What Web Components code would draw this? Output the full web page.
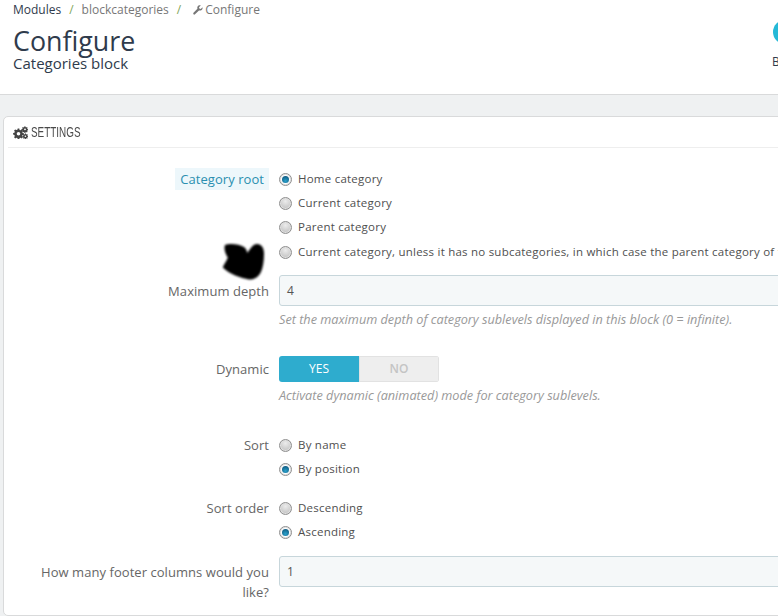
<!DOCTYPE html>
<html><head><meta charset="utf-8"><title>Configure</title>
<style>
html,body{margin:0;padding:0;width:778px;height:616px;overflow:hidden;background:#eff1f2}
body{font:12px/1.42 "Open Sans",sans-serif;color:#555}
</style></head><body>
<bo-page>
  <page-head></page-head>
  <settings-panel>
    <form-row label="Category root" active style="height:24px">
      <radio-opt checked>Home category</radio-opt>
    </form-row>
    <form-row style="height:24px"><radio-opt>Current category</radio-opt></form-row>
    <form-row style="height:25px"><radio-opt>Parent category</radio-opt></form-row>
    <form-row style="height:24px"><radio-opt>Current category, unless it has no subcategories, in which case the parent category of the current category is used</radio-opt><ink-blob slot="over"></ink-blob></form-row>
    <form-row label="Maximum depth" style="height:75px;margin-top:8px" field>
      <text-field value="4"></text-field>
      <help-text>Set the maximum depth of category sublevels displayed in this block (0 = infinite).</help-text>
    </form-row>
    <form-row label="Dynamic" style="height:80px;margin-top:6px" field2>
      <yes-no></yes-no>
      <help-text>Activate dynamic (animated) mode for category sublevels.</help-text>
    </form-row>
    <form-row label="Sort" style="height:24px"><radio-opt>By name</radio-opt></form-row>
    <form-row style="height:39px"><radio-opt checked>By position</radio-opt></form-row>
    <form-row label="Sort order" style="height:24px"><radio-opt>Descending</radio-opt></form-row>
    <form-row style="height:33px"><radio-opt checked>Ascending</radio-opt></form-row>
    <form-row label="How many footer columns would you like?" field>
      <text-field value="1"></text-field>
    </form-row>
  </settings-panel>
</bo-page>
<script>
function def(name,html,init){
  customElements.define(name,class extends HTMLElement{
    connectedCallback(){ if(this.shadowRoot) return;
      const r=this.attachShadow({mode:'open'}); r.innerHTML=html; if(init) init(this,r); }
  });
}
def('bo-page',`<style>:host{display:block;width:778px;height:616px;overflow:hidden}</style><slot></slot>`);
def('page-head',`<style>
:host{display:block;position:relative;height:94px;background:#fff;border-bottom:1px solid #d9dadb;color:#2f3b4c}
.crumbs{display:flex;align-items:center;height:19px;padding-left:13px;font-size:12px;color:#777}
.crumbs b{font-weight:400;color:#2f3b4c}
.crumbs i{font-style:normal;color:#7fa65a;margin:0 8px}
.crumbs i.last{margin-right:12px}
.crumbs svg{width:10px;height:10px;margin-right:2px}
h1{margin:0;padding:8px 0 0 13px;font:400 26.8px/28px "Open Sans",sans-serif;color:#2f3b4c}
h2{margin:0;padding-left:13px;font:400 15px/16px "Open Sans",sans-serif;color:#2f3b4c}
.tool{position:absolute;left:773px;top:20px;width:24px;height:24px;border-radius:50%;background:#25b9d7}
.lab{position:absolute;left:772px;top:54px;font-size:12px;line-height:16px;color:#2f3b4c}
</style>
<div class="crumbs"><b>Modules</b><i>/</i><span>blockcategories</span><i class="last">/</i>
<svg viewBox="0 0 12 12"><path fill="#777" d="M11.4 2.6 9.3 4.7 7.6 4.3 7.2 2.6 9.3.5C7.8 0 6.2.6 5.5 1.9 5 2.8 5 3.8 5.3 4.6L.6 9.4c-.5.5-.5 1.300 0 1.800s1.300.5 1.800 0l4.800-4.700c.8.300 1.800.300 2.700-.2 1.300-.7 1.900-2.300 1.500-3.700z"/></svg><span>Configure</span></div>
<h1>Configure</h1><h2>Categories block</h2>
<div class="tool"></div><div class="lab">B</div>`);
def('settings-panel',`<style>
:host{display:block;position:relative;margin:21px -40px 0 3px;height:500px;background:#fff;border:1px solid #d9dadb;border-radius:5px;box-sizing:border-box}
.hd{display:flex;align-items:center;gap:3px;height:30px;margin-left:4px;border-bottom:1px solid #eee;padding-left:5px;color:#4a4a4a}
.hd svg{width:15px;height:13px;flex:none}
.hd span{display:inline-block;font:400 15px/30px "Liberation Sans",sans-serif;transform:scaleX(.66);transform-origin:0 50%}
.bd{padding-top:22px}
</style>
<div class="hd"><svg viewBox="0 0 15 13"><g fill="#444"><path fill-rule="evenodd" d="M4.700 2.600h1.600l.3 1.300 1 .4 1.200-.7 1.100 1.100-.7 1.200.4 1 1.300.3v1.600l-1.300.3-.4 1 .7 1.200-1.100 1.100-1.200-.7-1 .4-.3 1.300H4.700l-.3-1.300-1-.4-1.200.7-1.100-1.100.7-1.200-.4-1L.1 8.600V7l1.300-.3.4-1-.7-1.200 1.100-1.100 1.200.7 1-.4zM5.500 6a1.800 1.800 0 1 0 0 3.600 1.800 1.800 0 0 0 0-3.600z"/><path fill-rule="evenodd" d="M11.500.2l.9.100.1.800.7.300.7-.4.700.7-.4.700.3.700.8.100v1l-.8.100-.3.700.4.700-.7.700-.7-.4-.7.300-.1.800h-1l-.1-.8-.7-.3-.7.400-.7-.7.400-.7-.3-.7-.8-.1v-1l.8-.1.300-.7-.4-.7.700-.7.700.4.700-.3zM12 2.400a.9.900 0 1 0 0 1.800.9.900 0 0 0 0-1.800z"/><path fill-rule="evenodd" d="M12 7.300l.8.100.1.700.6.300.6-.4.600.6-.4.600.3.600.7.100v.9l-.7.100-.3.600.4.600-.6.600-.6-.4-.6.300-.1.700h-.9l-.1-.7-.6-.3-.6.4-.6-.6.400-.6-.3-.6-.7-.1V10l.7-.1.3-.6-.4-.6.6-.6.600.4.600-.3zM12.400 9.400a.8.800 0 1 0 0 1.600.8.800 0 0 0 0-1.600z"/></g></svg><span>SETTINGS</span></div>
<div class="bd"><slot></slot></div>`);
def('form-row',`<style>
:host{display:grid;position:relative;grid-template-columns:265px 1fr;column-gap:10px;font-size:12.5px;line-height:18px}
.l{text-align:right;color:#666;padding-left:22px;font-size:13px;letter-spacing:.05px;line-height:18px}
.l.a span{background:#edf7fb;color:#2a8fb0;padding:2px 5px}
.c{min-width:0}
</style><div class="l"><span></span></div><div class="c"><slot></slot></div><slot name="over"></slot>`,
(h,r)=>{
  const l=r.querySelector('.l'); const s=l.querySelector('span');
  s.textContent=h.getAttribute('label')||'';
  if(h.hasAttribute('active')) l.classList.add('a');
  if(h.hasAttribute('field')){ l.style.paddingTop='6px'; l.style.lineHeight='20px'; }
  if(h.hasAttribute('field2')){ l.style.paddingTop='3px'; l.style.lineHeight='20px'; }
});
def('radio-opt',`<style>
:host{display:flex;align-items:center;gap:6px;height:18px;white-space:nowrap;font-size:11.5px;color:#4f4f4f;letter-spacing:.23px}
i{flex:none;box-sizing:border-box;width:13px;height:13px;border-radius:50%;border:1px solid #8f8f8f;background:radial-gradient(circle at 50% 30%,#ececec,#b8b8b8);box-shadow:inset 0 0 0 1px #e0e0e0;display:flex;align-items:center;justify-content:center}
i.on{background:#fff}
i.on::after{content:"";width:7px;height:7px;border-radius:50%;background:radial-gradient(circle at 50% 70%,#2aa2cc,#0a4a70)}
</style><i></i><slot></slot>`,(h,r)=>{ if(h.hasAttribute('checked')) r.querySelector('i').classList.add('on'); });
def('text-field',`<style>
:host{display:block;box-sizing:border-box;height:31px;background:#f5f8f9;border:1px solid #c7d6db;border-radius:3px;padding:0 7px;font-size:12px;line-height:30px;color:#555}
</style><span></span>`,(h,r)=>{r.querySelector('span').textContent=h.getAttribute('value')});
def('help-text',`<style>:host{display:block;margin-top:5px;font-style:italic;font-size:12.7px;line-height:17px;color:#999;white-space:nowrap}</style><slot></slot>`);
def('yes-no',`<style>
:host{display:flex;width:160px;height:26px;border-radius:3px;overflow:hidden;font-size:12px;line-height:26px;text-align:center}
.y{flex:1;background:#2eacce;color:#fff}
.n{flex:1;background:#eee;color:#c4c4c4;box-shadow:inset 0 0 0 1px #e2e2e2;font-weight:600}
</style><div class="y">YES</div><div class="n">NO</div>`);
def('ink-blob',`<style>:host{position:absolute;left:218px;top:-1px;width:44px;height:38px;display:block}svg{width:100%;height:100%;display:block;filter:blur(.8px)}</style>
<svg viewBox="0 0 44 38"><path fill="#000" d="M3 3C8 1 17 2 22 5c2 1.500 3 4 3.300 6C28 7 31 2 35 2c5 0 7.300 5 7 10 0 7-1 14-3.500 19C36 35 32 38 27 37.500 19 36 7 32 .8 25.500c1-3.500 4-6.500 5-10C3.500 12 1.500 7 3 3z"/></svg>`);
</script>
</body></html>
